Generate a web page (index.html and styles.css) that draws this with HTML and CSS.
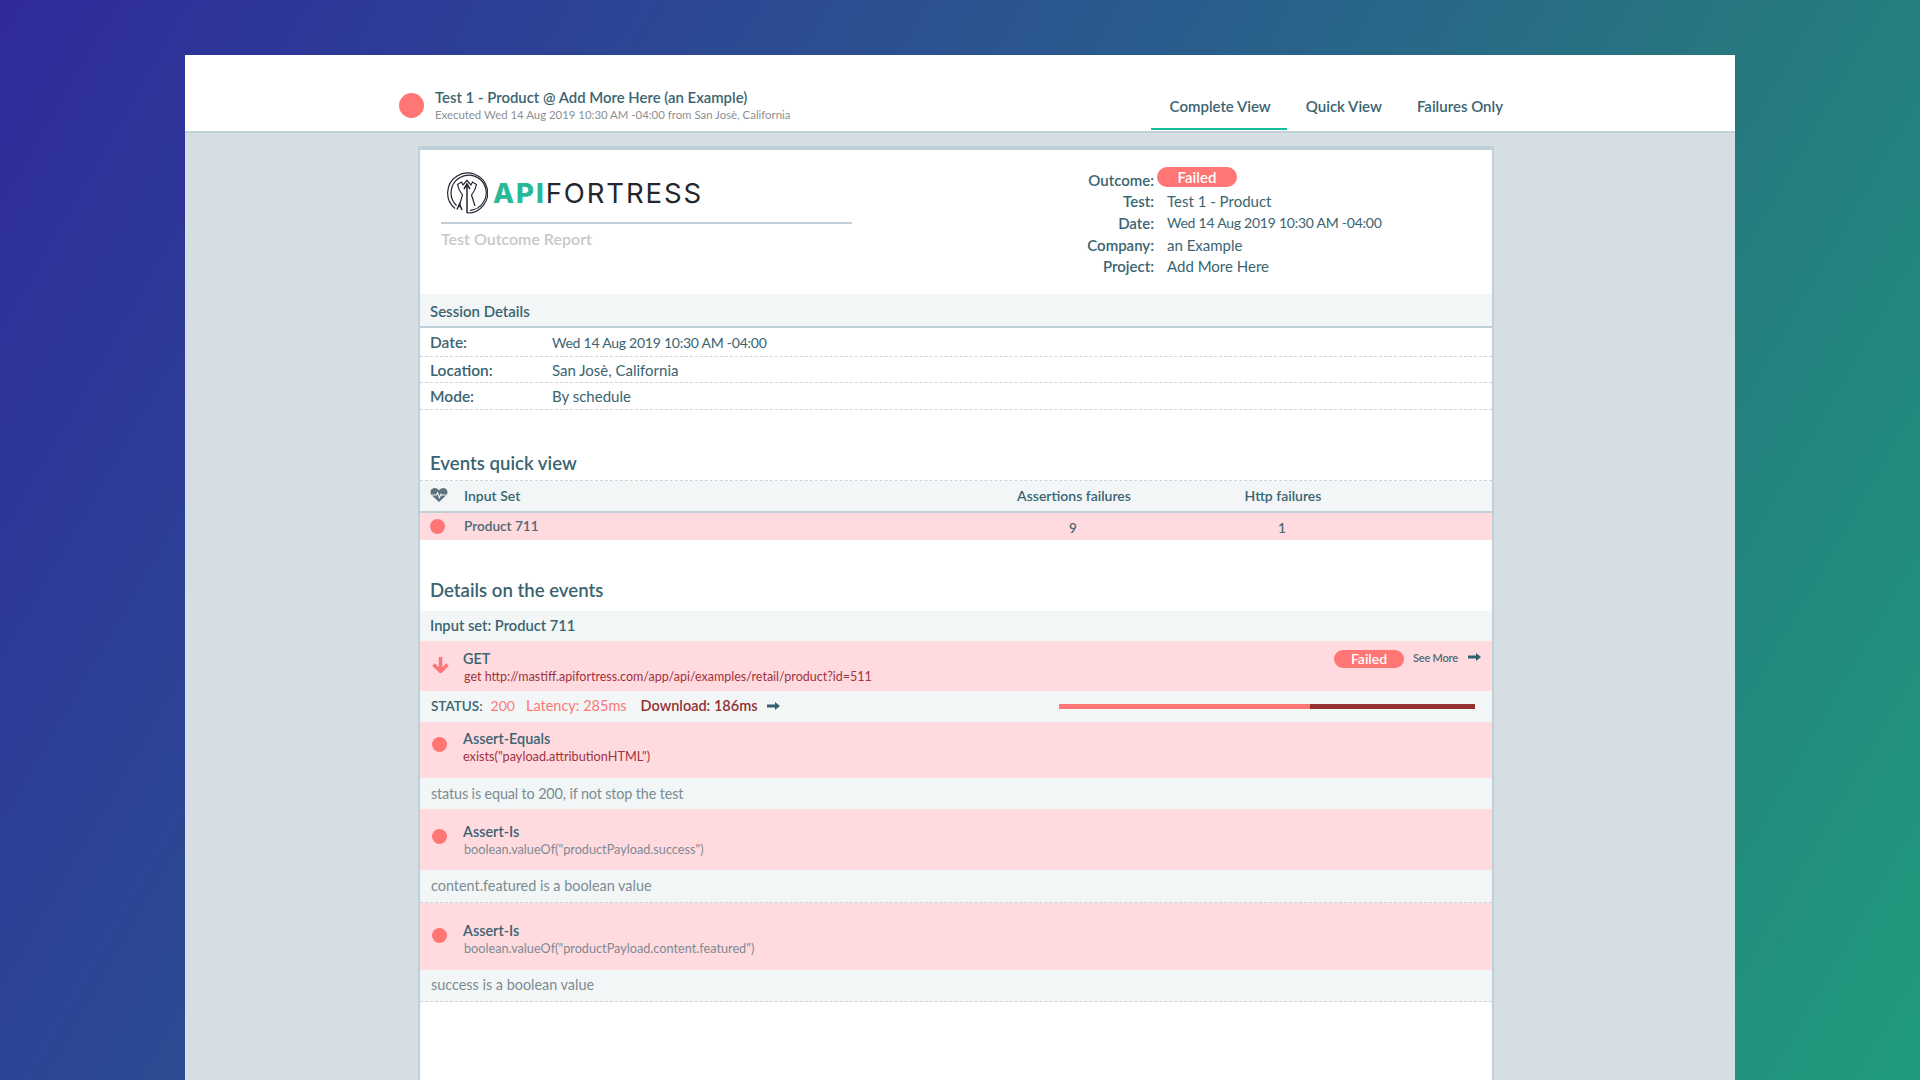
FILE: index.html
```html
<!DOCTYPE html>
<html lang="en">
<head>
<meta charset="utf-8">
<title>Test Outcome Report</title>
<link rel="stylesheet" href="styles.css">
</head>
<body>
<div class="window">
  <header class="topbar">
    <div class="topbar-left">
      <span class="dot dot-lg"></span>
      <div class="topbar-title">
        <div class="title">Test 1 - Product @ Add More Here (an Example)</div>
        <div class="subtitle">Executed Wed 14 Aug 2019 10:30 AM -04:00 from San Josè, California</div>
      </div>
    </div>
    <nav class="tabs">
      <a class="tab tab-active">Complete View</a>
      <a class="tab">Quick View</a>
      <a class="tab">Failures Only</a>
    </nav>
  </header>
  <main class="card">
    <section class="report-head">
      <div class="brand">
        <div class="logo">
          <svg class="logo-icon" viewBox="0 0 42 42" fill="none" stroke="#23262e" stroke-width="1.2">
            <path d="M9 36.5A20 20 0 1 1 21 41"/>
            <path d="M10.5 33.5A17.6 17.6 0 1 1 24 38.3"/>
            <path d="M13 35L16.5 23Q12.5 18 11.5 12.5L15.5 10L17 13L21 8.5L25 13L26.5 10L30.5 12.5Q29.5 18 25.5 23L29 34"/>
            <path d="M21 41V12M18 17L21 12L24 17" stroke-width="1.5"/>
            <path d="M11 37.5L13.5 32L16 38" stroke-width="1.5"/>
          </svg>
          <span class="logo-text"><span class="logo-api">API</span><span class="logo-name">FORTRESS</span></span>
        </div>
        <div class="report-name">Test Outcome Report</div>
      </div>
      <dl class="meta">
        <div class="meta-row meta-outcome"><dt>Outcome:</dt><dd class="meta-pill"><span class="pill pill-lg">Failed</span></dd></div>
        <div class="meta-row meta-test"><dt>Test:</dt><dd>Test 1 - Product</dd></div>
        <div class="meta-row meta-date"><dt>Date:</dt><dd class="date-text">Wed 14 Aug 2019 10:30 AM -04:00</dd></div>
        <div class="meta-row meta-company"><dt>Company:</dt><dd>an Example</dd></div>
        <div class="meta-row meta-project"><dt>Project:</dt><dd>Add More Here</dd></div>
      </dl>
    </section>

    <div class="band band-session">Session Details</div>
    <div class="kv kv-date"><span class="kv-key">Date:</span><span class="date-text">Wed 14 Aug 2019 10:30 AM -04:00</span></div>
    <div class="kv kv-location"><span class="kv-key">Location:</span><span>San Josè, California</span></div>
    <div class="kv kv-mode"><span class="kv-key">Mode:</span><span>By schedule</span></div>

    <h2 class="heading heading-quick">Events quick view</h2>
    <div class="quick quick-head">
      <svg class="heart" viewBox="0 0 18 14">
        <path d="M9 14L2 7.600C-.8 4.800.6.300 4.400.1 6.400 0 8 1 9 2.600 10 1 11.600 0 13.600.1 17.400.3 18.800 4.800 16 7.600Z" fill="#5d727c"/>
        <path d="M1.500 7H6.200L7.600 4.800 9.400 9.500 11 6.200 11.800 7H16.500" fill="none" stroke="#f2f6f7" stroke-width="1.100"/>
      </svg>
      <span>Input Set</span><span class="quick-num">Assertions failures</span><span class="quick-num">Http failures</span>
    </div>
    <div class="quick quick-row">
      <span class="dot"></span><span>Product 711</span><span class="quick-num quick-val">9</span><span class="quick-num quick-val">1</span>
    </div>

    <h2 class="heading heading-details">Details on the events</h2>
    <div class="band band-input">Input set: Product 711</div>
    <div class="event event-get">
      <svg class="arrow-down" viewBox="0 0 17 16" fill="none" stroke="#ff7675" stroke-width="3.500">
        <path d="M8.500 0V14M1.500 7.500L8.500 14.500L15.500 7.500"/>
      </svg>
      <div class="event-body">
        <div class="event-name">GET</div>
        <div class="event-code">get http://mastiff.apifortress.com/app/api/examples/retail/product?id=511</div>
      </div>
      <div class="event-actions">
        <span class="pill">Failed</span>
        <span class="see-more">See More</span>
        <svg class="arrow-right" viewBox="0 0 13 8"><path d="M0 2.400H8V0L13 4 8 8V5.600H0Z" fill="#34606e"/></svg>
      </div>
    </div>
    <div class="status">
      <span class="status-label">STATUS:</span>
      <span class="status-code">200</span>
      <span class="status-latency">Latency: 285ms</span>
      <span class="status-download">Download: 186ms</span>
      <svg class="arrow-right" viewBox="0 0 13 8"><path d="M0 2.400H8V0L13 4 8 8V5.600H0Z" fill="#34606e"/></svg>
      <div class="timing"><span class="timing-latency"></span><span class="timing-download"></span></div>
    </div>
    <div class="event event-a1">
      <span class="dot dot-event"></span>
      <div class="event-body">
        <div class="event-name">Assert-Equals</div>
        <div class="event-code event-code-wide">exists("payload.attributionHTML")</div>
      </div>
    </div>
    <div class="note note-first">status is equal to 200, if not stop the test</div>
    <div class="event event-a2">
      <span class="dot dot-event"></span>
      <div class="event-body">
        <div class="event-name">Assert-Is</div>
        <div class="event-code event-code-wide event-code-muted">boolean.valueOf("productPayload.success")</div>
      </div>
    </div>
    <div class="note note-dash">content.featured is a boolean value</div>
    <div class="event event-a3">
      <span class="dot dot-event"></span>
      <div class="event-body">
        <div class="event-name">Assert-Is</div>
        <div class="event-code event-code-wide event-code-muted">boolean.valueOf("productPayload.content.featured")</div>
      </div>
    </div>
    <div class="note note-dash note-last">success is a boolean value</div>
  </main>
</div>
</body>
</html>
```
FILE: styles.css
```css
* { box-sizing: border-box; }
html, body { margin: 0; height: 100%; }
body {
  height: 1080px;
  overflow: hidden;
  padding: 55px 185px 0;
  background: linear-gradient(120deg, #2f2a9c 0%, #2a5a8e 45%, #26787f 70%, #1f9b7c 100%);
  font-family: "Lato", "Noto Sans", sans-serif;
  font-size: 15px;
  color: #3a6471;
}
.window {
  height: 1025px;
  background: #d5dfe3;
  overflow: hidden;
}
.topbar {
  height: 78px;
  background: #fff;
  border-bottom: 2px solid #c3d1d8;
  display: flex;
  justify-content: space-between;
  padding: 0 216px 0 214px;
}
.topbar-left { display: flex; align-items: center; gap: 11px; padding-top: 25px; }
.dot { display: block; width: 15px; height: 15px; border-radius: 50%; background: #ff7675; flex: none; }
.dot-lg { width: 25px; height: 25px; }
.topbar-title { margin-top: -1px; }
.title { font-size: 14.900px; font-weight: 600; line-height: 18px; color: #3a6471; }
.subtitle { font-size: 11.400px; line-height: 15px; margin-top: 1.500px; color: #8b9093; }
.tabs { display: flex; align-self: flex-end; margin-bottom: 1px; }
.tab {
  display: block;
  height: 41px;
  padding: 0 16px 0 19px;
  line-height: 34px;
  font-size: 15px;
  font-weight: 600;
  color: #3a6471;
}
.tab-active { border-bottom: 2px solid #14bd9c; }

.card {
  width: 1076px;
  height: 960px;
  margin: 13px 0 0 233px;
  background: #fff;
  border: 2px solid #bfd0d8;
  border-top-width: 4px;
}
.report-head { height: 144px; display: flex; }
.brand { flex: none; width: 411px; margin-left: 21px; padding-top: 22px; }
.logo { height: 52px; display: flex; align-items: flex-start; gap: 5px; border-bottom: 2px solid #bfd0d8; padding-left: 5px; }
.logo-icon { width: 42px; height: 42px; }
.logo-text { font-family: "Inter", "Lato", sans-serif; font-size: 27.500px; line-height: 42px; letter-spacing: 1.900px; color: #23262e; }
.logo-api { font-weight: 800; color: #2ab998; }
.logo-name { font-weight: 400; }
.report-name { font-size: 16px; font-weight: 600; line-height: 20px; margin-top: 5px; color: #c5c9cb; }

.meta { margin: 0 0 0 182px; padding-top: 19px; }
.meta-row { display: flex; align-items: center; gap: 13px; line-height: 20px; }
.meta-row dt { width: 120px; text-align: right; font-weight: 600; }
.meta-row dd { margin: 0; white-space: nowrap; }
.meta-outcome { height: 20px; }
.meta-outcome dt { padding-top: 1px; }
.meta-row .meta-pill { margin-left: -10px; margin-top: -5px; }
.meta-test { margin-top: 1px; height: 22px; }
.meta-date { height: 22px; }
.meta-company { height: 22px; }
.meta-project { height: 20px; }
.date-text { font-size: 14px; letter-spacing: -.25px; }

.pill {
  display: inline-block;
  width: 70px;
  height: 18px;
  border-radius: 9px;
  background: #ff7675;
  color: #fff;
  font-weight: 600;
  font-size: 14px;
  line-height: 18px;
  text-align: center;
}
.pill-lg { width: 80px; height: 20px; border-radius: 10px; font-size: 15px; line-height: 20px; }

.band { height: 32px; padding-left: 10px; background: #f2f6f7; font-weight: 600; display: flex; align-items: center; }
.band-session { height: 34px; border-bottom: 2px solid #bfd0d8; padding-top: 2px; }
.band-input { height: 30px; font-size: 14.700px; padding-bottom: 2px; }
.kv { padding-left: 10px; display: flex; align-items: center; border-bottom: 1px dashed #cdd4d7; }
.kv-date { height: 29px; }
.kv-location { height: 26px; }
.kv-mode { height: 27px; }
.kv-key { width: 122px; font-weight: 600; font-size: 15.500px; }

.heading { margin: 0; padding-left: 10px; font-size: 18.600px; font-weight: 600; color: #3a6471; line-height: 24px; }
.heading-quick { padding-top: 41px; height: 71px; border-bottom: 1px dashed #cdd4d7; }
.heading-details { padding-top: 38px; height: 71px; }

.quick {
  display: grid;
  grid-template-columns: 34px 510px 200px 218px;
  align-items: center;
  padding-left: 10px;
  font-size: 14px;
  font-weight: 600;
  color: #4d6873;
}
.quick-head { height: 32px; background: #f2f6f7; border-bottom: 2px solid #bfd0d8; color: #3a6471; padding-bottom: 2px; }
.quick-row { height: 27px; background: #ffdbe0; font-size: 13.600px; }
.quick-row > span:nth-child(2) { margin-top: -2px; }
.quick-num { text-align: center; }
.quick-val { padding-top: 3px; padding-right: 2px; }
.heart { width: 18px; height: 14px; margin-top: -1px; }

.event { background: #ffdbe0; position: relative; display: flex; padding-left: 12px; align-items: flex-start; }
.event-get { height: 50px; padding-top: 9px; }
.event-a1 { height: 56px; padding-top: 8px; }
.event-a2 { height: 61px; padding-top: 14px; }
.event-a3 { height: 67px; padding-top: 19px; }
.arrow-down { width: 17px; height: 16px; margin-top: 7px; flex: none; }
.dot-event { margin-top: 7px; }
.event-a2 .dot-event, .event-a3 .dot-event { margin-top: 6px; }
.event-body { margin-left: 16px; }
.event-get .event-body { margin-left: 14px; }
.event-name { font-size: 14.400px; font-weight: 600; line-height: 18px; color: #3a6471; }
.event-code { font-size: 12.500px; line-height: 17px; color: #a1323c; padding-left: 1px; }
.event-code-wide { font-size: 12.700px; padding-left: 0; }
.event-code-muted { color: #7e8a93; padding-left: 1px; }
.event-actions { position: absolute; right: 11px; top: 9px; display: flex; align-items: center; }
.see-more { width: 45px; white-space: nowrap; font-size: 11px; letter-spacing: -.2px; font-weight: 600; color: #4d6873; margin: -3px 10px 0 9px; }
.arrow-right { width: 13px; height: 8px; flex: none; }
.event-actions .arrow-right { margin-top: -4px; }

.status { height: 31px; background: #f2f6f7; display: flex; align-items: center; padding: 0 0 2px 11px; font-weight: 600; font-size: 14.500px; }
.status-label { font-size: 13.500px; }
.status-code { margin-left: 8px; font-size: 14px; color: #ff7675; font-weight: 400; }
.status-latency { margin-left: 11px; color: #ff7675; font-weight: 400; }
.status-download { margin-left: 14px; color: #943232; }
.status .arrow-right { margin-left: 9px; }
.timing { display: flex; width: 416px; height: 5px; margin: 2px 17px 0 auto; }
.timing-latency { width: 251px; background: #ff7675; }
.timing-download { flex: 1; background: #943232; }

.note { height: 31px; background: #f2f6f7; padding-left: 11px; display: flex; align-items: center; color: #7b8c93; font-size: 14.400px; }
.note-first { letter-spacing: -.14px; }
.note-dash { height: 33px; padding-bottom: 2px; border-bottom: 1px dashed #cdd4d7; }
.note-last { height: 32px; }
```
